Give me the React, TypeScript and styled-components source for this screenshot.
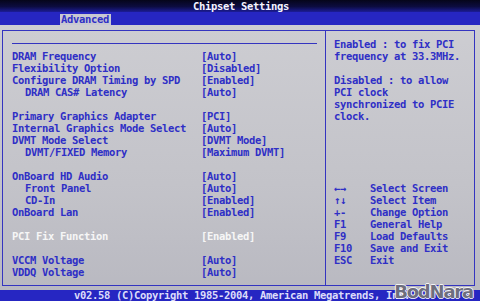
import React from "react";
import styled, { createGlobalStyle } from "styled-components";

// BIOS palette
const BLUE_TEXT = "#2f2fc6";
const BAR_BLUE = "#2626c2";
const LINE_BLUE = "#3434c0";

const GlobalStyle = createGlobalStyle`
  html, body {
    margin: 0;
    padding: 0;
    background: #000;
  }
  #root {
    width: 480px;
    height: 301px;
  }
`;

interface SettingRow {
  label: string;
  value: string;
  indent?: boolean;
  selected?: boolean;
}

// null = empty line between groups
const settings: (SettingRow | null)[] = [
  { label: "DRAM Frequency", value: "[Auto]" },
  { label: "Flexibility Option", value: "[Disabled]" },
  { label: "Configure DRAM Timing by SPD", value: "[Enabled]" },
  { label: "DRAM CAS# Latency", value: "[Auto]", indent: true },
  null,
  { label: "Primary Graphics Adapter", value: "[PCI]" },
  { label: "Internal Graphics Mode Select", value: "[Auto]" },
  { label: "DVMT Mode Select", value: "[DVMT Mode]" },
  { label: "DVMT/FIXED Memory", value: "[Maximum DVMT]", indent: true },
  null,
  { label: "OnBoard HD Audio", value: "[Auto]" },
  { label: "Front Panel", value: "[Auto]", indent: true },
  { label: "CD-In", value: "[Enabled]", indent: true },
  { label: "OnBoard Lan", value: "[Enabled]" },
  null,
  { label: "PCI Fix Function", value: "[Enabled]", selected: true },
  null,
  { label: "VCCM Voltage", value: "[Auto]" },
  { label: "VDDQ Voltage", value: "[Auto]" },
];

const helpLines = [
  "Enabled : to fix PCI",
  "frequency at 33.3MHz.",
  "",
  "Disabled : to allow",
  "PCI clock",
  "synchronized to PCIE",
  "clock.",
];

const keys = [
  ["←→", "Select Screen"],
  ["↑↓", "Select Item"],
  ["+-", "Change Option"],
  ["F1", "General Help"],
  ["F9", "Load Defaults"],
  ["F10", "Save and Exit"],
  ["ESC", "Exit"],
];

export default function App() {
  return (
    <>
      <GlobalStyle />
      <Screen>
        <TitleBar>Chipset Settings</TitleBar>
        <TabBar>
          <Tab>Advanced</Tab>
        </TabBar>

        <Main>
          <Frame>
            <SettingsPanel>
              <Rule />
              {settings.map((row, i) =>
                row ? (
                  <Row key={i} $selected={row.selected}>
                    <Label $indent={row.indent}>{row.label}</Label>
                    <span>{row.value}</span>
                  </Row>
                ) : (
                  <BlankLine key={i} />
                )
              )}
            </SettingsPanel>

            <HelpPanel>
              <div>
                {helpLines.map((line, i) =>
                  line ? <Line key={i}>{line}</Line> : <BlankLine key={i} />
                )}
              </div>
              <KeyLegend>
                {keys.map(([k, desc]) => (
                  <KeyRow key={desc}>
                    <span>{k}</span>
                    <span>{desc}</span>
                  </KeyRow>
                ))}
              </KeyLegend>
            </HelpPanel>
          </Frame>
        </Main>

        <Footer>v02.58 (C)Copyright 1985-2004, American Megatrends, Inc.</Footer>
        <Watermark>BodNara</Watermark>
      </Screen>
    </>
  );
}

const Screen = styled.div`
  position: relative;
  width: 480px;
  height: 301px;
  overflow: hidden;
  display: flex;
  flex-direction: column;
  font-family: "DejaVu Sans Mono", "Liberation Mono", monospace;
  font-weight: bold;
  font-size: 10.5px;
  letter-spacing: -0.32px;
  line-height: 12px;
`;

const TitleBar = styled.div`
  height: 12px;
  flex-shrink: 0;
  background: linear-gradient(to bottom, #05051a 0%, #0c0c40 55%, #1c1c98 100%);
  color: #f4f4ff;
  text-align: center;
  line-height: 12px;
  padding-left: 2px;
`;

const TabBar = styled.div`
  height: 13px;
  flex-shrink: 0;
  background: ${BAR_BLUE};
  display: flex;
  align-items: flex-end;
  padding-left: 60px;
`;

const Tab = styled.div`
  width: 50px;
  height: 11px;
  line-height: 11px;
  padding-left: 1px;
  background: #c8c8d2;
  color: ${BLUE_TEXT};
`;

const Main = styled.div`
  flex: 1;
  min-height: 0;
  background: linear-gradient(to bottom, #cdcdd2 0%, #c3c3c9 60%, #b9b9c1 100%);
  padding: 5px 5px 4px 2px;
  display: flex;
`;

const Frame = styled.div`
  flex: 1;
  border: 1px solid ${LINE_BLUE};
  display: grid;
  grid-template-columns: 323px 1fr;
  color: ${BLUE_TEXT};
`;

const SettingsPanel = styled.div`
  border-right: 1px solid ${LINE_BLUE};
  padding: 12px 9px 0 9px;
`;

const Rule = styled.div`
  width: 305px;
  border-top: 1px solid ${LINE_BLUE};
  margin-bottom: 6px;
`;

const Row = styled.div<{ $selected?: boolean }>`
  display: grid;
  grid-template-columns: 189px 1fr;
  height: 12px;
  white-space: pre;
  color: ${(p) => (p.$selected ? "#f6f6f6" : BLUE_TEXT)};
`;

const Label = styled.span<{ $indent?: boolean }>`
  padding-left: ${(p) => (p.$indent ? "13px" : "0")};
`;

const BlankLine = styled.div`
  height: 12px;
`;

const HelpPanel = styled.div`
  display: flex;
  flex-direction: column;
  justify-content: space-between;
  padding: 7px 0 19px 8px;
`;

const Line = styled.div`
  height: 12px;
  white-space: pre;
`;

const KeyLegend = styled.div`
  display: flex;
  flex-direction: column;
`;

const KeyRow = styled.div`
  display: grid;
  grid-template-columns: 36px 1fr;
  height: 12px;
  white-space: pre;
`;

const Footer = styled.div`
  height: 11px;
  flex-shrink: 0;
  background: ${BAR_BLUE};
  color: #dcdcfa;
  text-align: center;
  line-height: 11px;
  padding-left: 4px;
`;

// logo stamped over the lower right corner of the photo
const Watermark = styled.div`
  position: absolute;
  right: 7px;
  bottom: 0;
  font-family: "DejaVu Sans", "Liberation Sans", sans-serif;
  font-weight: bold;
  font-size: 18px;
  line-height: 19px;
  letter-spacing: -1.2px;
  color: rgba(90, 90, 108, 0.88);
  text-shadow: 1px 0 0 rgba(255, 255, 255, 0.85), -1px 0 0 rgba(255, 255, 255, 0.85),
    0 1px 0 rgba(255, 255, 255, 0.85), 0 -1px 0 rgba(255, 255, 255, 0.85);
`;
